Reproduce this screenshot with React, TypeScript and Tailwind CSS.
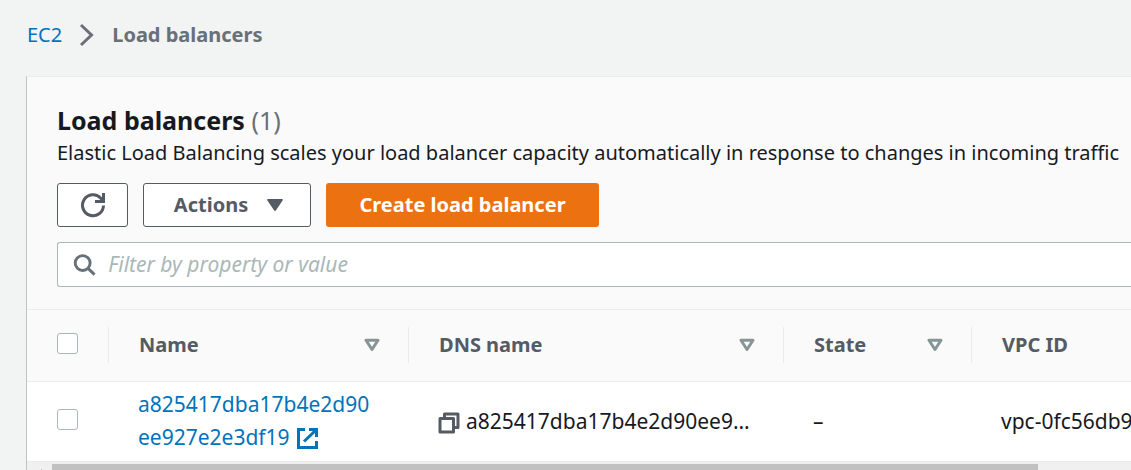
import React from "react";

function SortIcon() {
  return (
    <svg width="16" height="14" viewBox="0 0 16 14" fill="none" aria-hidden="true">
      <path d="M2 2.200h12L8 11.500z" stroke="#879596" strokeWidth="3" strokeLinejoin="round" />
    </svg>
  );
}

function HeaderCell({ label, sortable = true }: { label: string; sortable?: boolean }) {
  return (
    <th scope="col" className="p-0 text-left font-bold text-[#545b64]">
      <div className="flex h-9 items-center justify-between border-l border-[#eaeded] pl-[30px] pr-7">
        <span className="whitespace-nowrap">{label}</span>
        {sortable && (
          <button type="button" aria-label={`Sort by ${label}`}>
            <SortIcon />
          </button>
        )}
      </div>
    </th>
  );
}

function Checkbox({ label }: { label: string }) {
  return (
    <input
      type="checkbox"
      aria-label={label}
      className="block size-[21px] appearance-none rounded-[3px] border border-[#aab7b8] bg-white checked:bg-[#0073bb]"
    />
  );
}

export default function App() {
  return (
    <div className="h-screen overflow-hidden bg-[#f2f3f3] pl-[26px] font-['Noto_Sans',sans-serif] text-[20px] leading-8 text-[#16191f]">
      <nav aria-label="Breadcrumb" className="flex h-[76px] items-center pb-1.5 pl-px">
        <a href="#ec2" className="text-[#0073bb]">EC2</a>
        <svg className="mx-[17px]" width="16" height="24" viewBox="0 0 16 24" fill="none" aria-hidden="true">
          <path d="M2 2l10.500 10L2 22" stroke="#687078" strokeWidth="3" />
        </svg>
        <span className="font-bold text-[#687078]">Load balancers</span>
      </nav>

      <main className="border-l border-t border-l-[#bcc4c5] border-t-[#eaeded] bg-[#fafafa]">
        <header className="pl-[30px] pt-[27px]">
          <h1 className="text-[25px] font-bold leading-8">
            Load balancers <span className="font-normal text-[#687078]">(1)</span>
          </h1>
          <p className="mt-px overflow-hidden whitespace-nowrap">
            Elastic Load Balancing scales your load balancer capacity automatically in response to changes in incoming traffic
          </p>
          <div className="mt-3.5 flex gap-[15px]">
            <button
              type="button"
              aria-label="Refresh"
              className="flex h-11 w-[71px] items-center justify-center rounded-[3px] border border-[#545b64] bg-white"
            >
              <svg width="26" height="26" viewBox="0 0 26 26" fill="none" stroke="#545b64" strokeWidth="3" aria-hidden="true">
                <path d="M23.500 13.500A10.500 10.500 0 1 1 20.800 6.200L23 8.500" />
                <path d="M23.500 1v8.500H15" />
              </svg>
            </button>
            <button
              type="button"
              className="flex h-11 w-[168px] items-center justify-center gap-[18px] rounded-[3px] border border-[#545b64] bg-white pl-1 font-bold text-[#545b64]"
            >
              Actions
              <svg width="18" height="14" viewBox="0 0 18 14" fill="#545b64" aria-hidden="true">
                <path d="M2 1h14q1.500 0 .6 1.400L10 12.300q-1 1.200-2 0L1.400 2.400Q.500 1 2 1z" />
              </svg>
            </button>
            <button type="button" className="h-11 w-[273px] rounded-[3px] bg-[#ec7211] font-bold text-white">
              Create load balancer
            </button>
          </div>
          <label className="mt-[15px] flex h-[45px] items-center gap-3 rounded-l-[3px] border border-r-0 border-[#aab7b8] bg-white pl-[15px]">
            <svg width="24" height="24" viewBox="0 0 24 24" fill="none" stroke="#687078" strokeWidth="3" aria-hidden="true">
              <circle cx="10" cy="10" r="7.700" />
              <path d="M15.500 15.500l6.800 6.500" />
            </svg>
            <input
              type="text"
              aria-label="Filter by property or value"
              placeholder="Filter by property or value"
              className="w-full min-w-0 bg-transparent pb-0.5 text-[21px] italic outline-none placeholder:text-[#aab7b8]"
            />
          </label>
        </header>

        <div className="mt-[22px] overflow-hidden border-t border-[#eaeded]">
          <table className="w-full table-fixed border-collapse">
            <colgroup>
              <col className="w-[81px]" />
              <col className="w-[300px]" />
              <col className="w-[375px]" />
              <col className="w-[188px]" />
              <col />
            </colgroup>
            <thead>
              <tr className="h-[71px] border-b border-[#eaeded]">
                <th scope="col" className="p-0 pb-1 pl-[30px]">
                  <Checkbox label="Select all load balancers" />
                </th>
                <HeaderCell label="Name" />
                <HeaderCell label="DNS name" />
                <HeaderCell label="State" />
                <HeaderCell label="VPC ID" sortable={false} />
              </tr>
            </thead>
            <tbody className="text-[21px]">
              <tr className="h-20 bg-white">
                <td className="p-0 pb-1 pl-[30px]">
                  <Checkbox label="Select load balancer" />
                </td>
                <td className="py-1.5 pl-[30px] pr-0 leading-[33px]">
                  <a href="#load-balancer" className="text-[#0073bb]">
                    a825417dba17b4e2d90
                    <br />
                    ee927e2e3df19
                    <svg className="ml-1.5 inline-block align-[-5px]" width="23" height="23" viewBox="0 0 23 23" fill="none" stroke="#0073bb" strokeWidth="3" aria-hidden="true">
                      <path d="M9 2.500H2.500v18h18V14" />
                      <path d="M13 2.500h7.500V10M20 3L8 14.500" />
                    </svg>
                  </a>
                </td>
                <td className="p-0 pl-[30px]">
                  <div className="flex items-center gap-1.5">
                    <button type="button" aria-label="Copy DNS name" className="pt-1">
                      <svg width="22" height="22" viewBox="0 0 22 22" fill="none" stroke="#545b64" strokeWidth="3" strokeLinejoin="round" aria-hidden="true">
                        <path d="M2 6.500h13.500V20H2z" />
                        <path d="M6.500 6.500V2H20v13.500h-4.500" />
                      </svg>
                    </button>
                    <span className="whitespace-nowrap">a825417dba17b4e2d90ee9…</span>
                  </div>
                </td>
                <td className="p-0 pl-[30px]">–</td>
                <td className="overflow-hidden whitespace-nowrap p-0 pl-[30px]">vpc-0fc56db9</td>
              </tr>
            </tbody>
          </table>
          <div className="flex h-6 border-t border-[#eaeded] bg-[#f0f0f0] pt-0.5">
            <svg className="ml-1.5 mr-[7px] mt-1" width="12" height="12" viewBox="0 0 12 12" fill="#a3a3a3" aria-hidden="true">
              <path d="M9 1v10L3 6z" />
            </svg>
            <div className="mr-[93px] h-5 flex-1 bg-[#c1c1c1]" />
          </div>
        </div>
      </main>
    </div>
  );
}
